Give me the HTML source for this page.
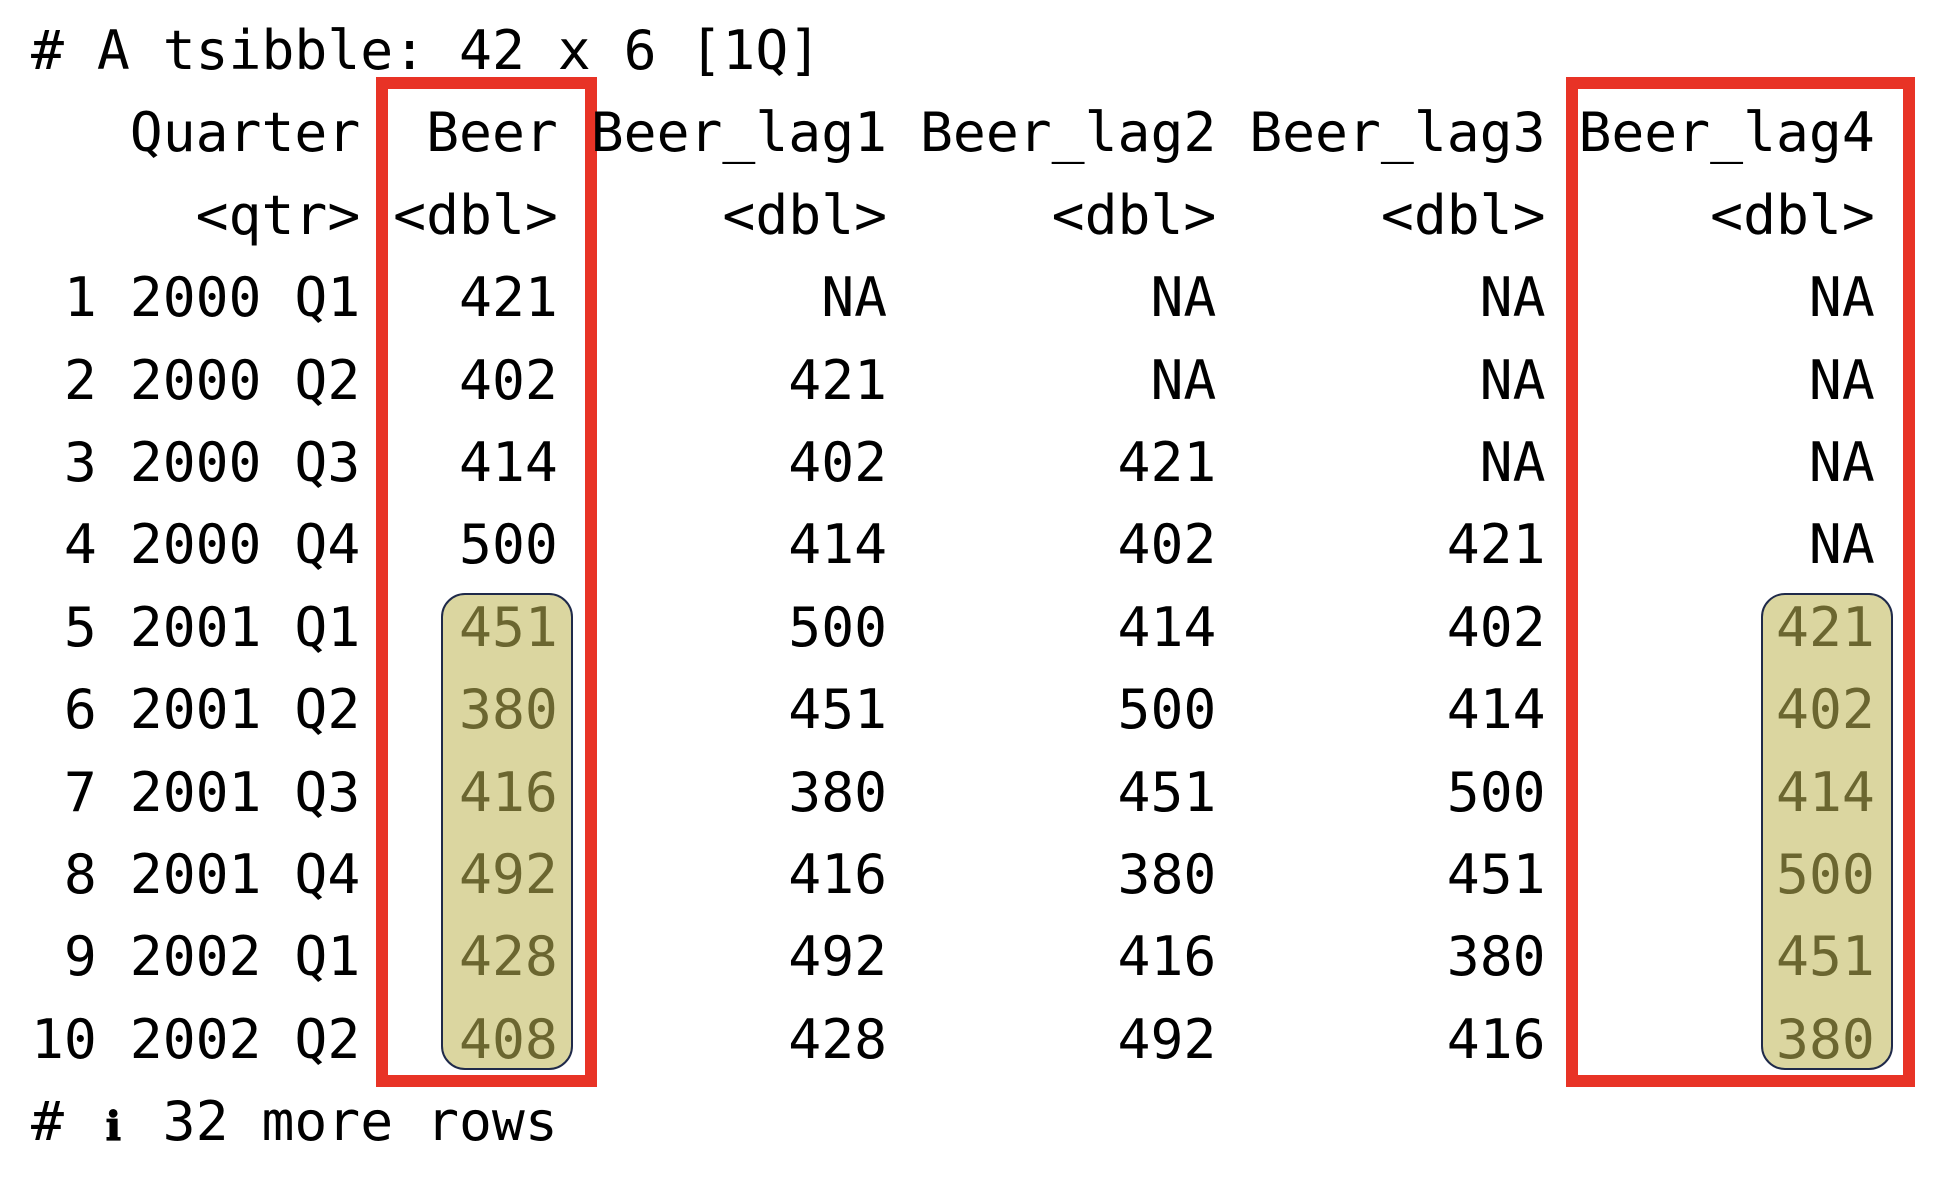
<!DOCTYPE html>
<html><head><meta charset="utf-8"><style>
html,body{margin:0;padding:0;background:#fff;width:1942px;height:1190px;overflow:hidden;position:relative}
pre{position:absolute;left:31px;top:9px;margin:0;font-family:"DejaVu Sans Mono","Liberation Mono",monospace;font-size:54.7px;line-height:82.4px;color:#000;z-index:2}
.h{color:#6b6630}
.i{display:inline-block;width:32.9px;text-align:center;font-size:40px;font-weight:bold}
.red{position:absolute;border:12.5px solid #e83326;box-sizing:border-box;z-index:1}
.ol{position:absolute;background:#dbd6a0;border:2.5px solid #1f2a4a;border-radius:24px;box-sizing:border-box;z-index:1}
</style></head><body>
<div class="red" style="left:376px;top:77px;width:221px;height:1010px"></div>
<div class="red" style="left:1566px;top:77px;width:349px;height:1010px"></div>
<div class="ol" style="left:441px;top:593px;width:132px;height:477px"></div>
<div class="ol" style="left:1761px;top:593px;width:132px;height:477px"></div>
<pre># A tsibble: 42 x 6 [1Q]
   Quarter  Beer Beer_lag1 Beer_lag2 Beer_lag3 Beer_lag4
     &lt;qtr&gt; &lt;dbl&gt;     &lt;dbl&gt;     &lt;dbl&gt;     &lt;dbl&gt;     &lt;dbl&gt;
 1 2000 Q1   421        NA        NA        NA        NA
 2 2000 Q2   402       421        NA        NA        NA
 3 2000 Q3   414       402       421        NA        NA
 4 2000 Q4   500       414       402       421        NA
 5 2001 Q1   <span class="h">451</span>       500       414       402       <span class="h">421</span>
 6 2001 Q2   <span class="h">380</span>       451       500       414       <span class="h">402</span>
 7 2001 Q3   <span class="h">416</span>       380       451       500       <span class="h">414</span>
 8 2001 Q4   <span class="h">492</span>       416       380       451       <span class="h">500</span>
 9 2002 Q1   <span class="h">428</span>       492       416       380       <span class="h">451</span>
10 2002 Q2   <span class="h">408</span>       428       492       416       <span class="h">380</span>
# <span class="i">ℹ</span> 32 more rows</pre>
</body></html>
